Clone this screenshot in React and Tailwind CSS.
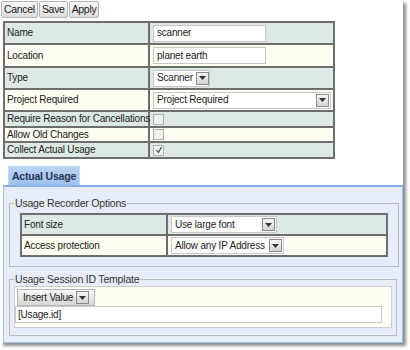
import React from "react";

const FONT = { fontFamily: "'Liberation Sans', Arial, sans-serif" };

function Btn({ children }) {
  return (
    <button className="h-[17px] px-[2px] text-[10.5px] leading-none tracking-[-0.3px] text-[#222] bg-gradient-to-b from-[#f8f8f8] to-[#dcdcdc] border border-[#b5b5b5] rounded-[2px]">
      {children}
    </button>
  );
}

function Arrow() {
  return (
    <span className="flex shrink-0 items-center justify-center w-[13px] h-[13px] border border-[#8a8a8a] bg-gradient-to-b from-[#f4f4f4] to-[#d4d4d4]">
      <svg width="7" height="4" viewBox="0 0 7 4">
        <path d="M0 0h7L3.5 4z" fill="#333" />
      </svg>
    </span>
  );
}

function Select({ value, width }) {
  return (
    <div
      className={`flex items-center justify-between gap-[3px] h-[17px] pl-[3px] pr-[1px] bg-white border border-[#c8c8c8] ${width}`}
    >
      <span className="text-[#222] whitespace-nowrap">{value}</span>
      <Arrow />
    </div>
  );
}

function Check({ checked }) {
  return (
    <span className="flex items-center justify-center w-[11px] h-[11px] border border-[#b0b0b0] bg-[#f0f0f0]">
      {checked && (
        <svg width="8" height="8" viewBox="0 0 8 8">
          <path d="M1.5 4l2 2.5L6.5 1" stroke="#444" strokeWidth="1.2" fill="none" />
        </svg>
      )}
    </span>
  );
}

const rows = [
  { label: "Name", bg: "bg-[#dde9e4]", h: "h-[22px]", input: "scanner" },
  { label: "Location", bg: "bg-[#fdfdf1]", h: "h-[23px]", input: "planet earth" },
  { label: "Type", bg: "bg-[#dde9e4]", h: "h-[22px]", select: ["Scanner", "w-[57px]"] },
  { label: "Project Required", bg: "bg-[#fdfdf1]", h: "h-[22px]", select: ["Project Required", "w-[178px]"] },
  { label: "Require Reason for Cancellations", bg: "bg-[#dde9e4]", h: "h-[16px]", check: false },
  { label: "Allow Old Changes", bg: "bg-[#fdfdf1]", h: "h-[15px]", check: false },
  { label: "Collect Actual Usage", bg: "bg-[#dde9e4]", h: "h-[16px]", check: true },
];

function Cell({ children, className = "" }) {
  return (
    <td className={`border-2 border-[#6e6e6e] p-0 leading-[12px] ${className}`}>{children}</td>
  );
}

export default function App() {
  return (
    <div
      className="w-[410px] h-[350px] bg-white text-[10px] leading-[13px] tracking-[-0.2px] text-[#222]"
      style={FONT}
    >
      <div className="w-[403px] h-[343px] bg-white shadow-[3px_3px_3px_rgba(0,0,0,0.45)]">
        {/* toolbar */}
        <div className="flex gap-[1px] pl-[1px] pt-[1px]">
          <Btn>Cancel</Btn>
          <Btn>Save</Btn>
          <Btn>Apply</Btn>
        </div>

        {/* properties */}
        <table className="table-fixed ml-[3px] mt-[3px] w-[332px] border-collapse border-2 border-[#6e6e6e]">
          <tbody>
            {rows.map((r) => (
              <tr key={r.label} className={`${r.bg} ${r.h}`}>
                <Cell className="w-[145px] pl-[2px] whitespace-nowrap">{r.label}</Cell>
                <Cell className="pl-[3px]">
                  {r.input && (
                    <div className="w-[113px] h-[17px] pl-[3px] flex items-center bg-white border border-[#c8c8c8]">
                      {r.input}
                    </div>
                  )}
                  {r.select && <Select value={r.select[0]} width={r.select[1]} />}
                  {r.check !== undefined && <Check checked={r.check} />}
                </Cell>
              </tr>
            ))}
          </tbody>
        </table>

        {/* tab */}
        <div className="mt-[7px] ml-[8px] w-[72px] h-[19px] flex items-center justify-center whitespace-nowrap text-[10.5px] font-bold text-[#2b3550] bg-gradient-to-b from-[#b9d3f5] to-[#9cc0ee] border-t border-l border-r border-[#c6d9f3]">
          Actual Usage
        </div>
        <div className="ml-[3px] w-[400px] h-[158px] bg-[#e7edf8] border-t-2 border-t-[#86b0ea] border-x border-x-[#9cc0ee] border-b border-b-[#9cc0ee] px-[5px] pt-[10px]">
          <fieldset className="border border-[#bcbcbc] px-[10px] pb-[9px] pt-0">
            <legend className="px-[1px] ml-[-6px] text-[10.5px] text-[#333]">Usage Recorder Options</legend>
            <table className="table-fixed w-[368px] mt-[3px] border-collapse border-2 border-[#6e6e6e]">
              <tbody>
                <tr className="bg-[#dde9e4] h-[21px]">
                  <Cell className="w-[146px] pl-[2px]">Font size</Cell>
                  <Cell className="pl-[3px]">
                    <Select value="Use large font" width="w-[106px]" />
                  </Cell>
                </tr>
                <tr className="bg-[#fdfdf1] h-[21px]">
                  <Cell className="pl-[2px]">Access protection</Cell>
                  <Cell className="pl-[3px]">
                    <Select value="Allow any IP Address" width="w-[113px]" />
                  </Cell>
                </tr>
              </tbody>
            </table>
          </fieldset>

          <fieldset className="mt-[6px] border border-[#bcbcbc] px-[4px] pb-[7px] pt-0">
            <legend className="px-[1px] text-[10.5px] text-[#333]">Usage Session ID Template</legend>
            <div className="bg-[#fdfdf1] border border-[#cfcfcf] pt-[2px] pb-[4px]">
              <div className="ml-[2px] inline-flex items-center gap-[3px] h-[17px] px-[5px] bg-gradient-to-b from-[#f6f6f6] to-[#d8d8d8] border border-[#b5b5b5]">
                Insert Value
                <Arrow />
              </div>
              <div className="w-[367px] h-[17px] flex items-center pl-[2px] bg-white border border-[#c8c8c8]">
                [Usage.id]
              </div>
            </div>
          </fieldset>
        </div>
      </div>
    </div>
  );
}
